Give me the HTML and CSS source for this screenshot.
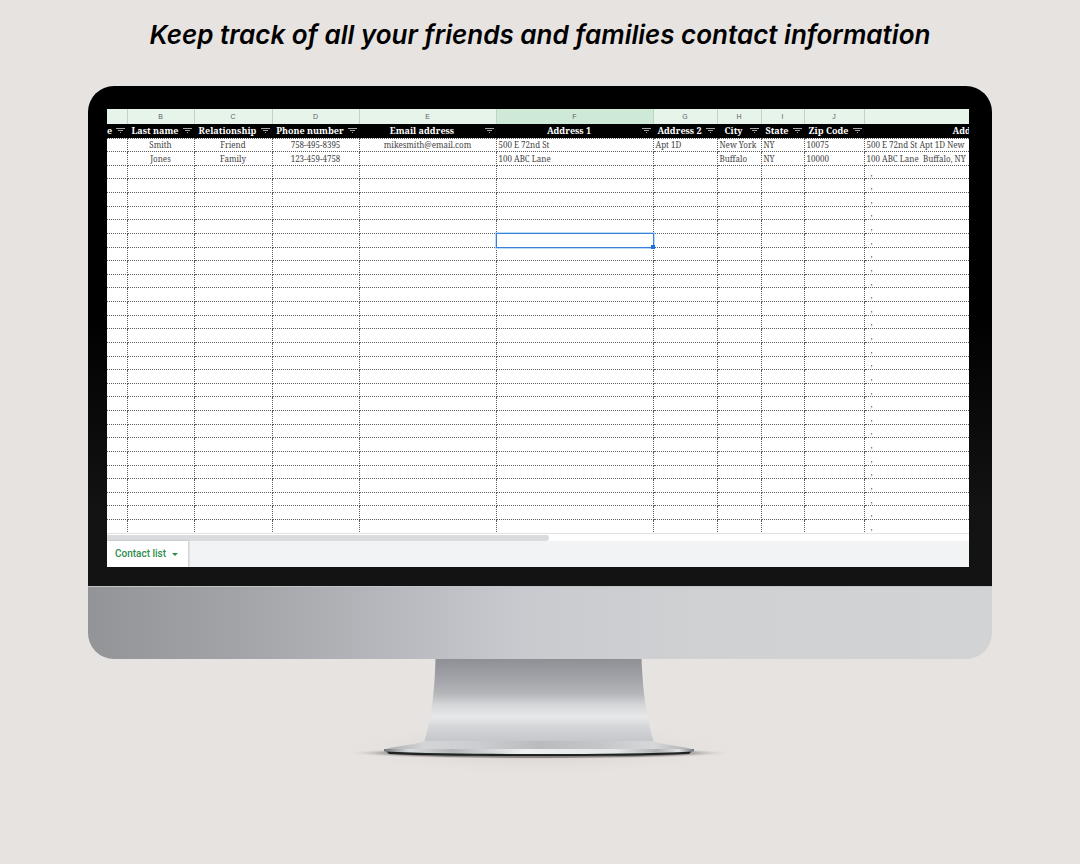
FILE: index.html
```html
<!DOCTYPE html>
<html lang="en">
<head>
  <meta charset="UTF-8" />
  <meta name="viewport" content="width=device-width, initial-scale=1.0"/>
  <title>Contact list</title>
  <link rel="stylesheet" href="styles.css">
</head>
<body>
  <svg class="defs" width="0" height="0" aria-hidden="true">
    <symbol id="filter" viewBox="0 0 9 5">
      <path d="M0 0.5H9M2 2.5H7M4 4.5H5" stroke="#a6a6a6" stroke-width="1" fill="none"/>
    </symbol>
  </svg>

  <h1>Keep track of all your friends and families contact information</h1>

  <main class="monitor">
    <div class="bezel">
      <div class="screen">
        <div class="sheet">
          <table>
            <colgroup>
              <col class="col-a"><col class="col-b"><col class="col-c"><col class="col-d">
              <col class="col-e"><col class="col-f"><col class="col-g"><col class="col-h">
              <col class="col-i"><col class="col-j"><col class="col-k">
            </colgroup>
            <thead>
              <tr class="letters">
                <th></th><th>B</th><th>C</th><th>D</th><th>E</th><th class="active">F</th>
                <th>G</th><th>H</th><th>I</th><th>J</th><th></th>
              </tr>
              <tr class="names">
                <th><div class="name first"><span>e</span><button aria-label="Filter first name"><svg><use href="#filter"/></svg></button></div></th>
                <th><div class="name"><span>Last name</span><button aria-label="Filter last name"><svg><use href="#filter"/></svg></button></div></th>
                <th><div class="name"><span>Relationship</span><button aria-label="Filter relationship"><svg><use href="#filter"/></svg></button></div></th>
                <th><div class="name"><span>Phone number</span><button aria-label="Filter phone number"><svg><use href="#filter"/></svg></button></div></th>
                <th><div class="name"><span>Email address</span><button aria-label="Filter email address"><svg><use href="#filter"/></svg></button></div></th>
                <th><div class="name"><span>Address 1</span><button aria-label="Filter address 1"><svg><use href="#filter"/></svg></button></div></th>
                <th><div class="name"><span>Address 2</span><button aria-label="Filter address 2"><svg><use href="#filter"/></svg></button></div></th>
                <th><div class="name"><span>City</span><button aria-label="Filter city"><svg><use href="#filter"/></svg></button></div></th>
                <th><div class="name"><span>State</span><button aria-label="Filter state"><svg><use href="#filter"/></svg></button></div></th>
                <th><div class="name"><span>Zip Code</span><button aria-label="Filter zip code"><svg><use href="#filter"/></svg></button></div></th>
                <th><div class="name"><span>Address</span></div></th>
              </tr>
            </thead>
            <tbody id="rows">
              <tr>
                <td></td><td class="mid">Smith</td><td class="mid">Friend</td><td class="mid">758-495-8395</td>
                <td class="mid">mikesmith@email.com</td><td>500 E 72nd St</td><td>Apt 1D</td>
                <td>New York</td><td>NY</td><td>10075</td><td>500 E 72nd St Apt 1D New</td>
              </tr>
              <tr>
                <td></td><td class="mid">Jones</td><td class="mid">Family</td><td class="mid">123-459-4758</td>
                <td></td><td>100 ABC Lane</td><td></td>
                <td>Buffalo</td><td>NY</td><td>10000</td><td>100 ABC Lane&nbsp; Buffalo, NY</td>
              </tr>
            </tbody>
          </table>
        </div>
        <div class="scrollbar"><div class="thumb"></div></div>
        <div class="tabs">
          <button class="tab">Contact list <span class="arrow"></span></button>
        </div>
      </div>
    </div>
    <div class="chin"></div>
  </main>

  <svg class="stand" viewBox="0 0 440 120" aria-hidden="true">
    <defs>
      <linearGradient id="neck" x1="0" y1="0" x2="0" y2="1">
        <stop offset="0" stop-color="#8f9095"/>
        <stop offset="0.2" stop-color="#9fa0a5"/>
        <stop offset="0.42" stop-color="#b5b6ba"/>
        <stop offset="0.55" stop-color="#d4d6d8"/>
        <stop offset="0.7" stop-color="#e6e8e9"/>
        <stop offset="0.83" stop-color="#d2d4d7"/>
        <stop offset="1" stop-color="#c4c6ca"/>
      </linearGradient>
      <linearGradient id="foot" x1="0" y1="0" x2="1" y2="0">
        <stop offset="0" stop-color="#a9acaf"/>
        <stop offset="0.13" stop-color="#d3d5d7"/>
        <stop offset="0.3" stop-color="#cbcdd0"/>
        <stop offset="0.5" stop-color="#b9bbbf"/>
        <stop offset="0.7" stop-color="#c4c6ca"/>
        <stop offset="0.87" stop-color="#d6d8da"/>
        <stop offset="1" stop-color="#a9acaf"/>
      </linearGradient>
      <linearGradient id="rim" x1="0" y1="0" x2="1" y2="0">
        <stop offset="0" stop-color="#73777a"/>
        <stop offset="0.08" stop-color="#d9dcde"/>
        <stop offset="0.22" stop-color="#b4b7ba"/>
        <stop offset="0.45" stop-color="#eef0f1"/>
        <stop offset="0.75" stop-color="#e4e6e7"/>
        <stop offset="0.88" stop-color="#b0b3b6"/>
        <stop offset="0.95" stop-color="#e0e2e4"/>
        <stop offset="1" stop-color="#73777a"/>
      </linearGradient>
      <radialGradient id="shade">
        <stop offset="0" stop-color="#55504c" stop-opacity="0.9"/>
        <stop offset="0.75" stop-color="#6b6562" stop-opacity="0.7"/>
        <stop offset="1" stop-color="#e7e3e0" stop-opacity="0"/>
      </radialGradient>
      <radialGradient id="haze">
        <stop offset="0" stop-color="#a8a29d" stop-opacity="0.35"/>
        <stop offset="1" stop-color="#e7e3e0" stop-opacity="0"/>
      </radialGradient>
    </defs>
    <ellipse cx="219" cy="90" rx="218" ry="28" fill="url(#haze)"/>
    <ellipse cx="219" cy="94" rx="194" ry="6" fill="url(#shade)"/>
    <path d="M115.500 0H321.500C323 36 327 62 334 83H104C111 62 114.500 36 115.500 0Z" fill="url(#neck)"/>
    <path d="M104 82C99 86 70 87 64 91H374C366 87 339 86 334 82Z" fill="url(#foot)"/>
    <path d="M66 92L69 95C110 96.800 160 97 219 97S328 96.800 369 95L372 92Z" fill="#1e2322"/>
    <path d="M64 90H374V92.500C330 94.500 280 95 219 95S108 94.500 64 92.500Z" fill="url(#rim)"/>
  </svg>

  <script src="sheet.js"></script>
</body>
</html>
```

FILE: styles.css
```css
:root {
  --page: #e7e3e0;
  --green: #2d8b4e;
  --cell-text: #454545;
}

* {
  box-sizing: border-box;
}

body {
  margin: 0;
  padding: 0 88px;
  min-height: 100vh;
  background: var(--page);
  font-family: Inter, "Liberation Sans", sans-serif;
}

.defs {
  position: absolute;
}

h1 {
  margin: 0;
  padding: 18px 0 34px;
  text-align: center;
  white-space: nowrap;
  font-size: 26px;
  line-height: 34px;
  font-weight: 600;
  font-style: italic;
  color: #000;
}

/* Monitor */
.monitor {
  border-radius: 26px;
  overflow: hidden;
}

.bezel {
  padding: 23px 23px 19px 19px;
  background: linear-gradient(#000 0%, #000 45%, #131313 85%, #131313 100%);
}

.chin {
  height: 73px;
  border-top: 1px solid #c3c4c6;
  background: linear-gradient(90deg, #939498 0%, #a2a3a7 16%, #b3b4b9 30%, #c9cacf 48%, #d0d1d3 68%, #d1d3d4 100%);
}

.stand {
  display: block;
  width: 440px;
  height: 120px;
  margin: 0 auto;
}

/* Spreadsheet */
.screen {
  background: #fff;
  overflow: hidden;
}

.sheet {
  height: 425px;
  overflow: hidden;
  border-bottom: 1px solid #e2e2e2;
}

table {
  width: 973px;
  height: 425px;
  table-layout: fixed;
  border-collapse: collapse;
  font-family: "Noto Serif", "DejaVu Serif", serif;
}

.col-a { width: 20px; }
.col-b { width: 67px; }
.col-c { width: 78px; }
.col-d { width: 87px; }
.col-e { width: 137px; }
.col-f { width: 157px; }
.col-g { width: 64px; }
.col-h { width: 44px; }
.col-i { width: 43px; }
.col-j { width: 60px; }
.col-k { width: 216px; }

th,
td {
  padding: 0;
  white-space: nowrap;
}

.letters th {
  height: 15px;
  border-right: 1px solid #c5d0c9;
  background: #e6f4ea;
  color: #5f6368;
  font: 400 7px/12px "Liberation Sans", sans-serif;
}

.letters .active {
  background: #ceead6;
}

.names {
  background: #000;
}

.names th {
  height: 14px;
  color: #fff;
  font-size: 9px;
  line-height: 12px;
  font-weight: 700;
}

.name {
  display: flex;
  align-items: center;
  padding-right: 2px;
}

.name span {
  flex: 1;
  text-align: center;
}

.name.first span {
  text-align: left;
}

.name button {
  display: flex;
  padding: 0;
  border: none;
  background: none;
  cursor: pointer;
}

.name svg {
  width: 9px;
  height: 5px;
}

td {
  position: relative;
  padding: 1px 2px 0;
  border: 1px dotted #5c5c5c;
  color: var(--cell-text);
  font-size: 8px;
  line-height: 10px;
}

td:first-child {
  border-left: none;
}

.mid {
  text-align: center;
}

.comma {
  padding-left: 6px;
}

.selection {
  position: absolute;
  inset: -1px;
  border: 1px solid #3c7fd6;
  box-shadow: 0 0 0 1px #b9dcfb;
}

.selection::after {
  content: '';
  position: absolute;
  right: -2px;
  bottom: -2px;
  width: 4px;
  height: 4px;
  background: #1a73e8;
}

/* Bottom bar */
.scrollbar {
  height: 7px;
  padding-top: 1px;
}

.thumb {
  width: 442px;
  max-width: 100%;
  height: 6px;
  border-radius: 0 3px 3px 0;
  background: #dadbde;
}

.tabs {
  display: flex;
  height: 26px;
  background: #f1f3f5;
}

.tab {
  display: flex;
  align-items: center;
  gap: 6px;
  padding: 0 10px 0 8px;
  border: none;
  background: #fff;
  box-shadow: 1px 0 2px rgba(0, 0, 0, 0.2);
  color: var(--green);
  font: 500 10px/12px Roboto, sans-serif;
  cursor: pointer;
}

.arrow {
  border: 3px solid transparent;
  border-top-color: var(--green);
  border-bottom: 0;
}
```

FILE: sheet.js
```js
const rows = document.getElementById('rows');
const EMPTY_ROWS = 27;
const SELECTED_ROW = 5;

for (let r = 0; r < EMPTY_ROWS; r++) {
  const tr = document.createElement('tr');
  for (let c = 0; c < 11; c++) {
    const td = document.createElement('td');
    if (c === 10) {
      td.className = 'comma';
      td.textContent = ',';
    }
    if (c === 5 && r === SELECTED_ROW) {
      td.innerHTML = '<div class="selection"></div>';
    }
    tr.appendChild(td);
  }
  rows.appendChild(tr);
}
```
